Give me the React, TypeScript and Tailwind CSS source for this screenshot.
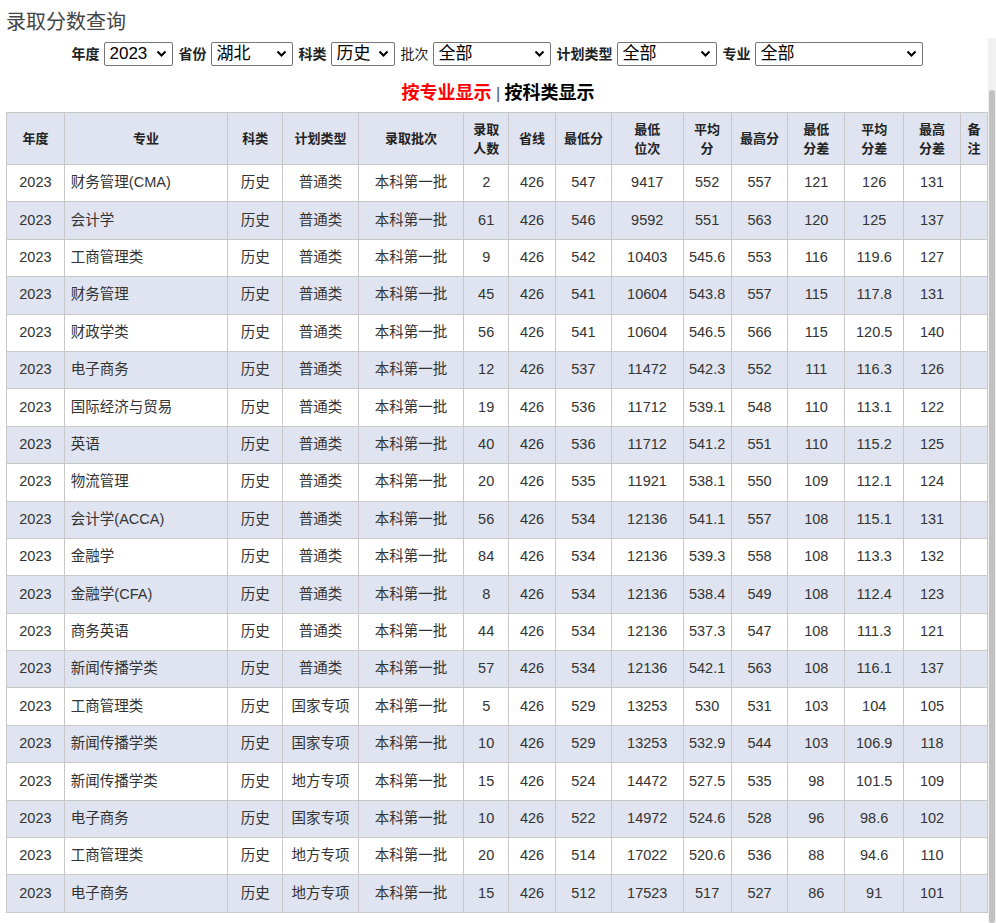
import React from "react";

const rows: (string | number)[][] = [
  ["财务管理(CMA)", "普通类", 2, 547, 9417, 552, 557, 121, 126, 131],
  ["会计学", "普通类", 61, 546, 9592, 551, 563, 120, 125, 137],
  ["工商管理类", "普通类", 9, 542, 10403, 545.6, 553, 116, 119.6, 127],
  ["财务管理", "普通类", 45, 541, 10604, 543.8, 557, 115, 117.8, 131],
  ["财政学类", "普通类", 56, 541, 10604, 546.5, 566, 115, 120.5, 140],
  ["电子商务", "普通类", 12, 537, 11472, 542.3, 552, 111, 116.3, 126],
  ["国际经济与贸易", "普通类", 19, 536, 11712, 539.1, 548, 110, 113.1, 122],
  ["英语", "普通类", 40, 536, 11712, 541.2, 551, 110, 115.2, 125],
  ["物流管理", "普通类", 20, 535, 11921, 538.1, 550, 109, 112.1, 124],
  ["会计学(ACCA)", "普通类", 56, 534, 12136, 541.1, 557, 108, 115.1, 131],
  ["金融学", "普通类", 84, 534, 12136, 539.3, 558, 108, 113.3, 132],
  ["金融学(CFA)", "普通类", 8, 534, 12136, 538.4, 549, 108, 112.4, 123],
  ["商务英语", "普通类", 44, 534, 12136, 537.3, 547, 108, 111.3, 121],
  ["新闻传播学类", "普通类", 57, 534, 12136, 542.1, 563, 108, 116.1, 137],
  ["工商管理类", "国家专项", 5, 529, 13253, 530, 531, 103, 104, 105],
  ["新闻传播学类", "国家专项", 10, 529, 13253, 532.9, 544, 103, 106.9, 118],
  ["新闻传播学类", "地方专项", 15, 524, 14472, 527.5, 535, 98, 101.5, 109],
  ["电子商务", "国家专项", 10, 522, 14972, 524.6, 528, 96, 98.6, 102],
  ["工商管理类", "地方专项", 20, 514, 17022, 520.6, 536, 88, 94.6, 110],
  ["电子商务", "地方专项", 15, 512, 17523, 517, 527, 86, 91, 101],
];

const headers: [React.ReactNode, number][] = [
  ["年度", 58], ["专业", 164], ["科类", 55], ["计划类型", 76], ["录取批次", 106],
  [<>录取<br />人数</>, 45], ["省线", 47], ["最低分", 56], [<>最低<br />位次</>, 72],
  [<>平均<br />分</>, 48], ["最高分", 57], [<>最低<br />分差</>, 57], [<>平均<br />分差</>, 59],
  [<>最高<br />分差</>, 57], [<>备<br />注</>, 27],
];

function Sel({ w, v }: { w: number; v: string }) {
  return (
    <div
      className="h-[24px] border border-[#767676] rounded-[2px] flex items-center justify-between pl-[5px] pr-[5px] text-[17px] font-normal text-black bg-white"
      style={{ width: w }}
    >
      <span>{v}</span>
      <svg width="11" height="8" viewBox="0 0 11 8"><path d="M1.5 1.5 5.5 5.5 9.5 1.5" stroke="#000" strokeWidth="2" fill="none" /></svg>
    </div>
  );
}

export default function App() {
  return (
    <div className="w-[996px] h-[923px] overflow-hidden bg-white" style={{ fontFamily: '"Liberation Sans", "Noto Sans CJK SC", sans-serif' }}>
      <div className="pl-[6px] pt-[8px] h-[38px] text-[20px] leading-[28px] text-[#444]">录取分数查询</div>
      <div className="flex h-[885px]">
        <div className="flex-1 overflow-hidden">
          <div className="flex items-center justify-center gap-[4px] h-[30px] pt-[2px] text-[14px] font-bold text-[#222] pl-[6px]">
            <span>年度</span><Sel w={69} v="2023" />
            <span className="ml-[2px]">省份</span><Sel w={82} v="湖北" />
            <span className="ml-[2px]">科类</span><Sel w={64} v="历史" />
            <span className="ml-[2px] font-normal">批次</span><Sel w={118} v="全部" />
            <span className="ml-[2px]">计划类型</span><Sel w={100} v="全部" />
            <span className="ml-[2px]">专业</span><Sel w={168} v="全部" />
          </div>
          <div className="text-center h-[44px] pt-[12px] text-[18px] font-bold leading-[26px] pl-[8px]">
            <span className="text-[#ff0000]">按专业显示</span>
            <span className="font-normal text-[#555] text-[16px]"> | </span>
            <span className="text-black">按科类显示</span>
          </div>
          <table className="ml-[6px] border-collapse text-[14.5px] text-[#333] table-fixed">
            <thead>
              <tr className="bg-[#dfe4f0] h-[52px]">
                {headers.map(([h, w], i) => (
                  <th key={i} style={{ width: w }} className="border border-[#c8c8c8] font-bold text-[13px] leading-[19px] text-[#222] p-0">{h}</th>
                ))}
              </tr>
            </thead>
            <tbody>
              {rows.map((r, i) => (
                <tr key={i} className={`h-[37.4px] ${i % 2 ? "bg-[#dfe4f0]" : "bg-white"}`}>
                  <td className="border border-[#c8c8c8] text-center">2023</td>
                  <td className="border border-[#c8c8c8] pl-[6px]">{r[0]}</td>
                  <td className="border border-[#c8c8c8] text-center">历史</td>
                  <td className="border border-[#c8c8c8] text-center">{r[1]}</td>
                  <td className="border border-[#c8c8c8] text-center">本科第一批</td>
                  <td className="border border-[#c8c8c8] text-center">{r[2]}</td>
                  <td className="border border-[#c8c8c8] text-center">426</td>
                  {r.slice(3).map((c, j) => (
                    <td key={j} className="border border-[#c8c8c8] text-center">{c}</td>
                  ))}
                  <td className="border border-[#c8c8c8]"></td>
                </tr>
              ))}
            </tbody>
          </table>
        </div>
        <div className="w-[8px] bg-[#f1f1f1] flex flex-col pt-[52px] px-[1px]">
          <div className="flex-1 bg-[#c1c1c1] rounded-[3px]" />
        </div>
      </div>
    </div>
  );
}
